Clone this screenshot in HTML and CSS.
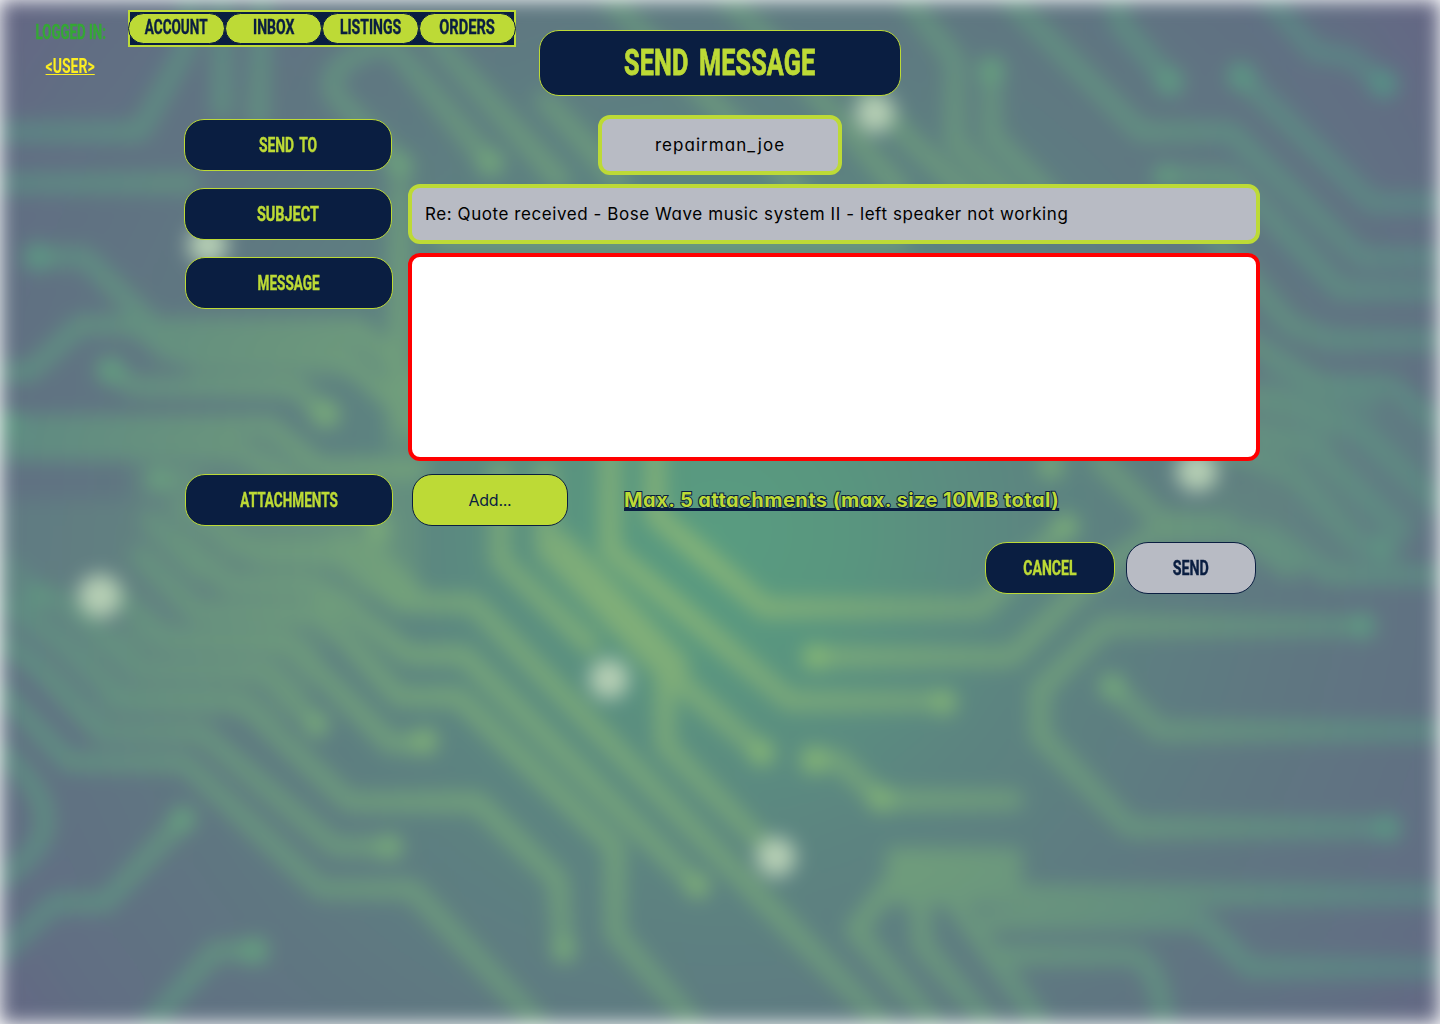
FILE: index.html
```html
<!DOCTYPE html>
<html lang="en">
<head>
<meta charset="utf-8">
<title>Send message</title>
<link rel="stylesheet" href="styles.css">
</head>
<body>
<svg class="backdrop" viewBox="0 0 1440 1024" aria-hidden="true">
  <defs>
    <radialGradient id="board" gradientUnits="userSpaceOnUse" cx="720" cy="530" r="960">
      <stop offset="0" stop-color="#599c80"/><stop offset=".13" stop-color="#59967f"/><stop offset=".34" stop-color="#5c8480"/>
      <stop offset=".6" stop-color="#5f7781"/><stop offset=".82" stop-color="#616e83"/><stop offset="1" stop-color="#676185"/>
    </radialGradient>
    <radialGradient id="copper" gradientUnits="userSpaceOnUse" cx="690" cy="560" r="860">
      <stop offset="0" stop-color="#87b577"/><stop offset=".25" stop-color="#76a57a"/><stop offset=".55" stop-color="#6a967d"/>
      <stop offset=".8" stop-color="#5f8c82"/><stop offset="1" stop-color="#5b8285"/>
    </radialGradient>
    <radialGradient id="pad" gradientUnits="userSpaceOnUse" cx="690" cy="560" r="860">
      <stop offset="0" stop-color="#92c272"/><stop offset=".4" stop-color="#82b478"/><stop offset=".7" stop-color="#64a280"/><stop offset="1" stop-color="#549788"/>
    </radialGradient>
    <filter id="soft" filterUnits="userSpaceOnUse" x="-40" y="-40" width="1520" height="1104" color-interpolation-filters="sRGB"><feGaussianBlur stdDeviation="9.5"/></filter>
    <clipPath id="edge"><rect width="1440" height="1024"/></clipPath>
  </defs>
  <g filter="url(#soft)"><g clip-path="url(#edge)">
    <rect width="1440" height="1024" fill="url(#board)"/>
    <path class="plane" d="M150 325H360L420 390V440L340 365H150ZM0 420H270L320 475H420V600H340L300 720H80L0 640V500H130V460H0ZM1260 340L1440 430V500L1400 570H1280L1200 480H1260Z"/>
    <g class="traces">
      <path d="M0 690L69 762H184L321 889H412L545 1030M0 640L40 670L101 733H202L335 847H390M0 600L60 640L124 700H239L349 802H477L558 880L564 953M60 600L138 670H266L317 725M110 590L170 642H289L390 743H425M140 555L197 613H321L399 697H458L615 847V933L700 1030M180 540L230 585H310L344 605L409 655H464L698 887M200 520L260 555H340L400 603H473L890 1030"/>
      <path d="M340 540L370 550L420 600M500 470V560L590 645M545 470V550L660 665L762 753M560 540L680 665M665 680V745L776 857"/>
      <path d="M655 440V515L765 608H982L1065 525M610 440V550L790 701H945M815 657H1012L1090 580L1150 535H1270L1330 575H1440M814 760H838L881 800H1014"/>
      <path d="M1363 626H1105L1040 690V735L1130 828H1388M1112 687L1160 731H1440M895 858H1014M895 875H1014M890 885L855 930L940 1030M920 895L922 945L995 1030M950 895L1045 1030M900 895H1440M990 920H1200L1250 968H1440M990 955H1130Q1160 960 1165 1030"/>
      <path d="M1115 -10L1120 23L1170 82M1241 77L1372 203H1440M1384 84L1350 57L1315 52L1260 -10M1000 -10L1141 132H1231L1361 258H1440M1165 176H1231L1341 290H1440M900 -10L955 60V142L1010 195M991 71V135L1050 195M840 60L910 140L970 195M1190 210L1290 325L1330 340H1440M1230 330L1320 385H1390L1440 425M1230 390L1300 410L1360 430L1440 505M1230 425L1310 445L1400 530M1230 455L1290 470L1360 545M1100 460L1160 520H1220L1290 570"/>
      <path d="M192 -10L185 50L140 132H0M222 -10V110M262 -10L258 120M0 183H190M380 45Q320 65 335 95L400 165M392 45L490 163M435 40L560 180M600 -10L720 110L800 190M715 -10L760 30L900 190M545 100L620 180M400 190V420M440 240H900"/>
      <path d="M37 257H85L155 328H360L420 390M0 372H30L80 325H130L180 355H340L420 425M110 370L135 387H295L325 415M0 425H270L320 468H420M0 450H240L290 480M160 480H190M180 505L250 550M150 520L200 570"/>
      <path d="M183 819L105 903H55L0 955M255 951H215L145 1030M0 750Q45 790 45 820Q45 850 0 880"/>
    </g>
    <path class="bus" d="M180 340H370M190 365H350M0 440H240M170 510H380M330 550H390M0 560L40 600H70M220 545H330M90 640H290M100 700H210M560 560L670 675M1250 400H1380M1250 440H1330M1010 908H1190M400 190V450"/>
    <g class="pads">
      <circle cx="317" cy="725" r="12"/><circle cx="425" cy="741" r="13"/><circle cx="390" cy="847" r="13"/><circle cx="564" cy="950" r="12"/><circle cx="698" cy="886" r="12"/><circle cx="762" cy="753" r="13"/><circle cx="815" cy="657" r="13"/><circle cx="944" cy="702" r="13"/><circle cx="814" cy="760" r="14"/><circle cx="881" cy="799" r="13"/><circle cx="1066" cy="527" r="13"/><circle cx="1051" cy="466" r="13"/><circle cx="1363" cy="626" r="13"/><circle cx="1388" cy="828" r="13"/><circle cx="1112" cy="686" r="13"/><circle cx="183" cy="819" r="13"/><circle cx="255" cy="951" r="14"/><circle cx="1170" cy="82" r="14"/><circle cx="1241" cy="76" r="14"/><circle cx="1384" cy="84" r="14"/><circle cx="991" cy="70" r="14"/><circle cx="1165" cy="176" r="12"/><circle cx="400" cy="166" r="13"/><circle cx="491" cy="163" r="13"/><circle cx="37" cy="257" r="14"/><circle cx="110" cy="370" r="14"/><circle cx="326" cy="414" r="14"/><circle cx="158" cy="479" r="12"/><circle cx="378" cy="528" r="12"/><circle cx="38" cy="595" r="10"/><circle cx="8" cy="422" r="12"/><circle cx="1382" cy="548" r="12"/>
    </g>
    <g class="vias"><circle cx="875" cy="113" r="20"/><circle cx="208" cy="245" r="20"/><circle cx="100" cy="596" r="22"/><circle cx="609" cy="679" r="20"/><circle cx="776" cy="857" r="20"/><circle cx="1197" cy="471" r="21"/></g>
  </g></g>
</svg>

<div class="page">
  <header class="top">
    <div class="login">
      <span class="caps logged">LOGGED IN:</span>
      <a class="caps user">&lt;USER&gt;</a>
    </div>
    <nav class="menu">
      <a class="pill"><span class="caps account">ACCOUNT</span></a>
      <a class="pill"><span class="caps inbox">INBOX</span></a>
      <a class="pill"><span class="caps listings">LISTINGS</span></a>
      <a class="pill"><span class="caps orders">ORDERS</span></a>
    </nav>
    <h1 class="title"><span class="caps heading">SEND MESSAGE</span></h1>
  </header>

  <main class="form">
    <div class="row">
      <div class="tag"><span class="caps sendto">SEND TO</span></div>
      <div class="field recipient"><span class="body joe">repairman_joe</span></div>
    </div>
    <div class="row">
      <div class="tag"><span class="caps subject">SUBJECT</span></div>
      <div class="field"><span class="body re">Re: Quote received - Bose Wave music system II - left speaker not working</span></div>
    </div>
    <div class="row message-row">
      <div class="tag shifted"><span class="caps message">MESSAGE</span></div>
      <div class="field editor"></div>
    </div>
    <div class="row attach-row">
      <div class="tag shifted"><span class="caps attachments">ATTACHMENTS</span></div>
      <div class="add"><span class="body addtext">Add...</span></div>
      <div class="limit"><span class="body max">Max. 5 attachments (max. size 10MB total)</span></div>
    </div>
    <div class="actions">
      <div class="button cancel"><span class="caps canceltext">CANCEL</span></div>
      <div class="button send"><span class="caps sendtext">SEND</span></div>
    </div>
  </main>
</div>
</body>
</html>
```
FILE: styles.css
```css
* { box-sizing: border-box; }
body { margin: 0; background: #fff; width: 1440px; height: 1024px; overflow: hidden; }

.backdrop { position: absolute; inset: 0; width: 1440px; height: 1024px; z-index: -1; }
.plane { fill: url(#copper); opacity: .35; }
.traces { fill: none; stroke: url(#copper); stroke-width: 20; stroke-linejoin: round; stroke-linecap: round; }
.bus { fill: none; stroke: url(#copper); stroke-width: 26; opacity: .6; }
.pads { fill: url(#pad); opacity: .8; }
.vias { fill: #b5ceb4; }

.page { display: flex; flex-direction: column; }
.caps { display: inline-block; font: 700 19.5px/24px Roboto, sans-serif; white-space: nowrap; padding-top: 1px; transform: scaleX(.72); -webkit-text-stroke: .4px currentColor; }
.body { display: inline-block; font: 400 17px/26px Inter, sans-serif; font-feature-settings: "cv11"; white-space: nowrap; }

.top { display: flex; align-items: flex-start; height: 119px; }
.login { width: 128px; padding: 20px 0 0 13px; display: flex; flex-direction: column; align-items: center; gap: 9px; }
.logged { color: #35a835; transform: scaleX(.68); }
.user { color: #fcee21; text-decoration: underline; text-decoration-thickness: 1px; text-underline-offset: 1px; text-decoration-skip-ink: none; -webkit-text-stroke: 0; }
.menu { margin-top: 10px; width: 388px; height: 37px; border: 2px solid #bdda36; background: #0a1e41; display: flex; justify-content: space-between; align-items: center; }
.pill { width: 97px; height: 31px; flex: none; border: 1px solid #0a1e41; border-radius: 16px; background: #bdda36; color: #0a1e41; display: flex; align-items: center; justify-content: center; }
.pill:first-child { margin-left: -2px; }
.pill:last-child { margin-right: -2px; }
.pill .caps { padding: 0 0 1px; }
.account { transform: scaleX(.695); }
.orders { transform: scaleX(.75); }
.title { margin: 30px 0 0 23px; width: 362px; height: 66px; border: 1.5px solid #bdda36; border-radius: 20px; background: #0a1e41; color: #bdda36; display: flex; align-items: center; justify-content: center; }
.heading { font-size: 36px; line-height: 44px; padding: 0; word-spacing: 6px; letter-spacing: .2px; transform: scaleX(.7); -webkit-text-stroke-width: .8px; }

.form { padding-left: 184px; width: 1260px; }
.row { display: flex; align-items: center; height: 60px; margin-bottom: 9px; }
.row:first-child { margin-top: -4px; }
.tag { width: 208px; height: 52px; flex: none; border: 1.5px solid #bdda36; border-radius: 20px; background: #0a1e41; color: #bdda36; display: flex; align-items: center; justify-content: center; }
.sendto { word-spacing: 3px; transform: scaleX(.71); }
.subject { transform: scaleX(.74); }
.message, .attachments { transform: scaleX(.695); }
.shifted { margin-left: 1px; }
.field { margin-left: 16px; flex: 1; height: 60px; border: 4px solid #bdda36; border-radius: 12px; background: #b8bbc4; color: #000; display: flex; align-items: center; padding-left: 13px; }
.recipient { flex: none; width: 244px; margin-left: 206px; padding: 0; justify-content: center; }
.re { letter-spacing: .57px; }
.joe { letter-spacing: 1.05px; }
.message-row { height: 208px; align-items: flex-start; margin-bottom: 13px; }
.message-row .tag { margin-top: 4px; }
.message-row .field { margin-left: 15px; }
.message-row .editor { height: 208px; border-color: #f00; background: #fff; }
.attach-row { height: 52px; margin-bottom: 16px; }
.add { margin-left: 19px; width: 156px; height: 52px; border: 1.5px solid #0a1e41; border-radius: 20px; background: #bdda36; color: #0a1e41; display: flex; align-items: center; justify-content: center; }
.addtext { font-size: 16px; letter-spacing: -.25px; }
.limit { margin-left: 56px; }
.max { font-weight: 700; font-size: 20px; letter-spacing: .45px; color: #bdda36; -webkit-text-stroke: 2px #0a1e41; paint-order: stroke fill; text-decoration: underline #0a1e41 3px; text-underline-offset: 1px; text-decoration-skip-ink: none; }
.actions { display: flex; justify-content: flex-end; gap: 11px; padding-right: 4px; }
.button { width: 130px; height: 52px; border: 1.5px solid #bdda36; border-radius: 22px; background: #0a1e41; color: #bdda36; display: flex; align-items: center; justify-content: center; }
.send { border-color: #0a1e41; background: #b8bbc4; color: #0a1e41; }
.sendtext { transform: scaleX(.73); }
```
